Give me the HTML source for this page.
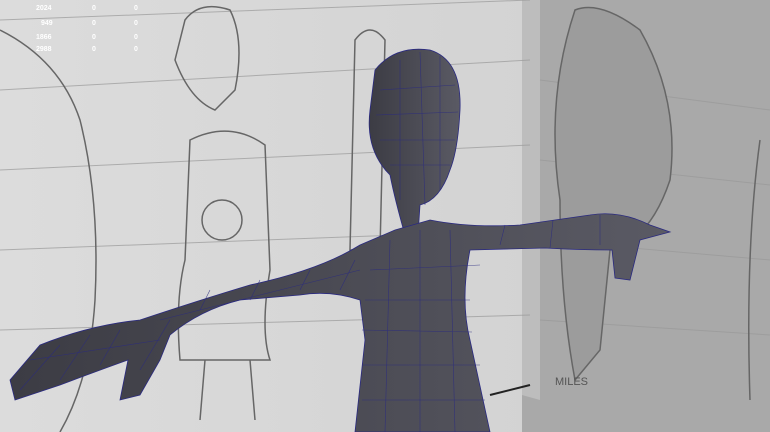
<!DOCTYPE html>
<html><head><style>
body{margin:0;width:770px;height:432px;overflow:hidden;background:#d3d3d3;font-family:"Liberation Sans",sans-serif}
svg{position:absolute;left:0;top:0}
.t{position:absolute;color:#fff;font-size:7px;font-weight:bold}
</style></head><body>
<svg width="770" height="432" viewBox="0 0 770 432">
<defs><linearGradient id="w" x1="0" x2="1"><stop offset="0" stop-color="#dcdcdc"/><stop offset="1" stop-color="#cfcfcf"/></linearGradient>
<linearGradient id="m" x1="0" x2="1"><stop offset="0" stop-color="#3c3c44"/><stop offset="1" stop-color="#5a5a64"/></linearGradient></defs>
<rect width="770" height="432" fill="url(#w)"/>
<polygon points="532,0 770,0 770,432 522,432 522,390" fill="#a9a9a9"/>
<polygon points="522,0 540,0 540,400 522,395" fill="#bdbdbd"/>
<g stroke="#999" stroke-width="1" fill="none" opacity=".7">
<line x1="0" y1="20" x2="530" y2="0"/><line x1="0" y1="90" x2="530" y2="60"/><line x1="0" y1="170" x2="530" y2="145"/><line x1="0" y1="250" x2="530" y2="230"/><line x1="0" y1="330" x2="530" y2="315"/>
<line x1="540" y1="80" x2="770" y2="110"/><line x1="540" y1="160" x2="770" y2="185"/><line x1="540" y1="240" x2="770" y2="260"/><line x1="540" y1="320" x2="770" y2="335"/>
</g>
<g stroke="#666" stroke-width="1.5" fill="none">
<path d="M0 30 Q60 60 80 120 Q100 200 95 300 Q90 380 60 432"/>
<path d="M185 20 Q200 0 230 10 Q245 40 235 90 L215 110 Q190 100 175 60 Z"/>
<path d="M190 140 Q230 120 265 145 L270 270 Q260 330 270 360 L180 360 Q175 300 185 260 Z"/>
<circle cx="222" cy="220" r="20"/>
<path d="M205 360 L200 420 M250 360 L255 420"/>
<path d="M355 40 Q370 20 385 40 L380 250 L350 250 Z"/>
<path d="M575 10 Q600 0 640 30 Q680 100 670 180 Q650 240 610 250 L600 350 L575 380 Q560 300 560 200 Q545 100 575 10Z" fill="#9c9c9c"/>
<path d="M760 140 Q745 250 750 400"/>
</g>
<text x="555" y="385" font-size="11" fill="#555" font-family="Liberation Sans">MILES</text>
<line x1="490" y1="395" x2="530" y2="385" stroke="#222" stroke-width="2"/>
<g fill="url(#m)" stroke="#2a2a80" stroke-width=".8">
<path d="M375 70 Q395 45 430 50 Q462 60 460 110 Q458 150 450 170 Q440 200 420 205 L418 235 L405 235 Q395 200 390 175 Q365 150 370 110 Z"/>
<path d="M395 230 L430 220 Q470 228 520 225 L590 215 Q620 210 650 225 L670 232 L640 240 L630 280 L615 278 L612 250 Q580 250 545 248 L470 250 Q460 300 470 340 L490 432 L355 432 L365 340 L360 300 Q330 290 300 295 L240 300 Q200 310 170 335 L160 360 L140 395 L120 400 L128 360 Q100 370 60 385 L15 400 L10 380 L40 345 Q90 325 140 320 Q200 300 250 285 Q320 270 360 245 Z"/>
</g>
<g stroke="#2a2a80" stroke-width=".6" fill="none" opacity=".8">
<path d="M380 90 L455 85 M376 115 L458 112 M380 140 L455 140 M390 165 L450 165 M400 60 L400 200 M420 52 L425 205 M440 56 L440 190"/>
<path d="M370 270 L480 265 M365 300 L470 300 M362 330 L472 332 M362 365 L480 365 M362 400 L485 400 M390 240 L385 432 M420 230 L420 432 M450 230 L455 432"/>
<path d="M20 390 L60 345 M60 380 L90 335 M100 365 L120 330 M140 370 L170 320 M200 310 L210 290 M250 300 L260 280 M300 290 L310 270 M340 290 L355 260 M500 245 L505 225 M550 248 L553 220 M600 245 L600 215 M30 360 L160 340 M160 320 L360 270"/>
</g>
</svg>
<div class="t" style="left:36px;top:5px">2024</div><div class="t" style="left:92px;top:5px">0</div><div class="t" style="left:134px;top:5px">0</div>
<div class="t" style="left:41px;top:20px">949</div><div class="t" style="left:92px;top:20px">0</div><div class="t" style="left:134px;top:20px">0</div>
<div class="t" style="left:36px;top:34px">1866</div><div class="t" style="left:92px;top:34px">0</div><div class="t" style="left:134px;top:34px">0</div>
<div class="t" style="left:36px;top:46px">2988</div><div class="t" style="left:92px;top:46px">0</div><div class="t" style="left:134px;top:46px">0</div>
</body></html>
